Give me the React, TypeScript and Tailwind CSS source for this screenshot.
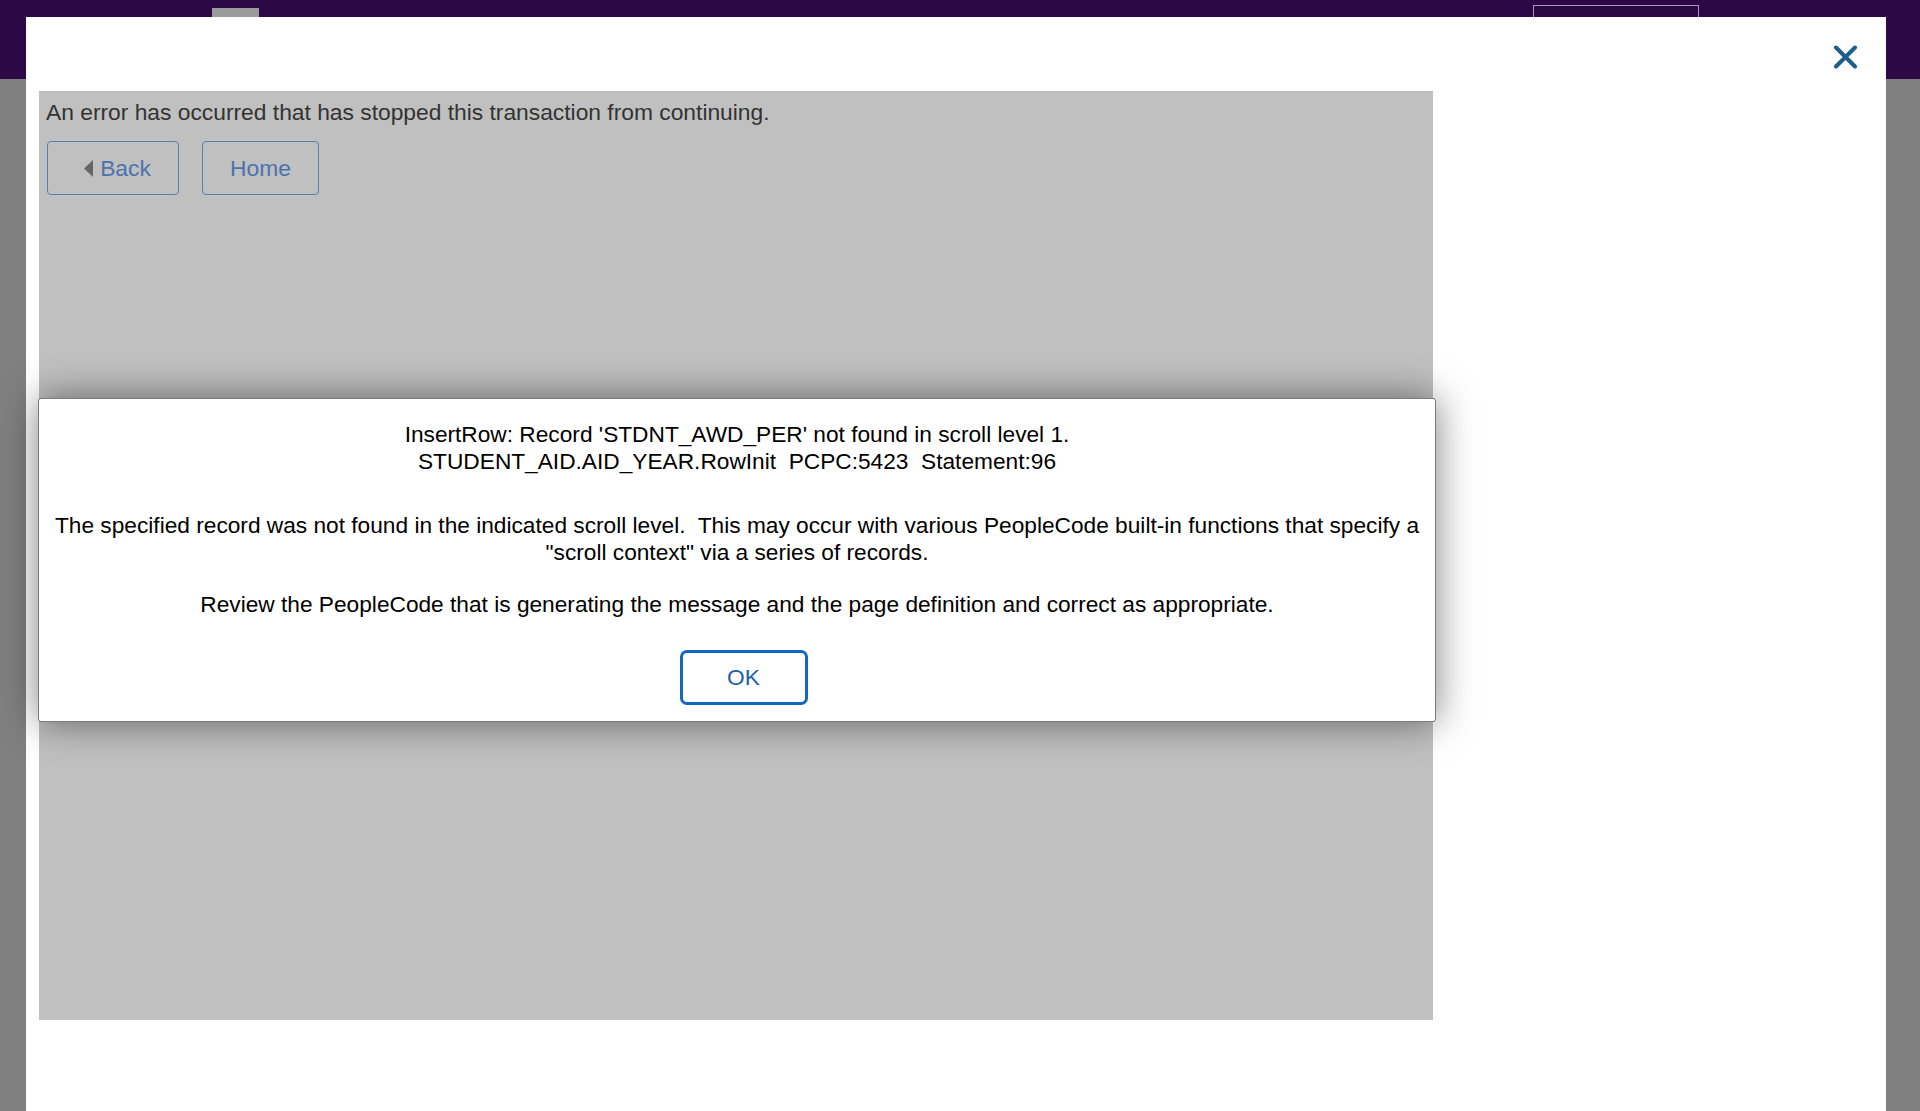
import React from "react";

export default function App() {
  return (
    <div
      className="relative h-[1111px] w-[1920px] overflow-hidden bg-[#808080]"
      style={{ fontFamily: '"Liberation Sans", Arial, Helvetica, sans-serif' }}
    >
      {/* underlying page header */}
      <div className="relative h-[79px] w-full bg-[#2d0846]">
        <div className="absolute left-[212px] top-[8px] h-[12px] w-[47px] bg-[#9b9b9b]" />
        <div className="absolute left-[1533px] top-[5px] h-[20px] w-[166px] border border-[#a99cb5]" />
      </div>

      {/* modal */}
      <div className="absolute left-[26px] top-[17px] h-[1094px] w-[1860px] bg-white">
        <button className="absolute right-[28px] top-[28px] flex h-[24px] w-[25px] items-center justify-center">
          <svg width="25" height="24" viewBox="0 0 25 24">
            <path d="M3 2.5 L22 21.5 M22 2.5 L3 21.5" stroke="#1d5e8a" strokeWidth="4" strokeLinecap="round" />
          </svg>
        </button>

        <div className="ml-[13px] mt-[74px] w-[1394px]">
          <div className="relative h-[929px] w-full bg-[#c0c0c0]">
            <div className="px-[7px] pt-[8px] text-[22.8px] leading-[26px] text-[#333333]">
              An error has occurred that has stopped this transaction from continuing.
            </div>
            <div className="flex gap-[23px] pl-[8px] pt-[16px]">
              <button className="flex h-[54px] w-[132px] items-center justify-center gap-[7px] rounded-[4px] border border-[#5b7fb3] pl-[8px] text-[22.8px] text-[#4b73ae]">
                <svg width="10" height="17" viewBox="0 0 10 17">
                  <path d="M10 0 L10 17 L1 8.5 Z" fill="#666666" />
                </svg>
                <span>Back</span>
              </button>
              <button className="flex h-[54px] w-[117px] items-center justify-center rounded-[4px] border border-[#5b7fb3] text-[22.8px] text-[#4b73ae]">
                Home
              </button>
            </div>

            {/* error dialog */}
            <div className="absolute left-[-1px] top-[307px] flex h-[324px] w-[1398px] flex-col items-center rounded-[3px] border border-[#7a7a7a] bg-white pt-[22px] text-center text-[22.7px] leading-[27px] text-black shadow-[0_0_38px_rgba(0,0,0,0.5)]">
              <p>
                InsertRow: Record 'STDNT_AWD_PER' not found in scroll level 1.
                <br />
                STUDENT_AID.AID_YEAR.RowInit&nbsp; PCPC:5423&nbsp; Statement:96
              </p>
              <p className="mt-[37px] px-[4px]">
                The specified record was not found in the indicated scroll level.&nbsp; This may occur with various
                PeopleCode built-in functions that specify a<br />
                "scroll context" via a series of records.
              </p>
              <p className="mt-[25px]">
                Review the PeopleCode that is generating the message and the page definition and correct as appropriate.
              </p>
              <button className="ml-[13px] mt-[32px] flex h-[55px] w-[128px] items-center justify-center rounded-[7px] border-[3px] border-[#1565c4] text-[22.7px] text-[#1f5fae]">
                OK
              </button>
            </div>
          </div>
        </div>
      </div>
    </div>
  );
}
